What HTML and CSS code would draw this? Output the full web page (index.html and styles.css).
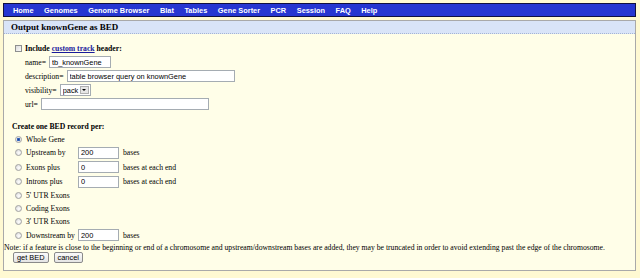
FILE: index.html
```html
<!DOCTYPE html>
<html lang="en">
<head>
    <meta charset="UTF-8">
    <title>Output knownGene as BED</title>
    <link rel="stylesheet" href="styles.css">
</head>
<body>
    <div class="nav">
        <a href="#">Home</a>
        <a href="#">Genomes</a>
        <a href="#">Genome Browser</a>
        <a href="#">Blat</a>
        <a href="#">Tables</a>
        <a href="#">Gene Sorter</a>
        <a href="#">PCR</a>
        <a href="#">Session</a>
        <a href="#">FAQ</a>
        <a href="#">Help</a>
    </div>

    <div class="panel">
        <div class="panel-title">Output knownGene as BED</div>

        <div class="track-header">
            <label class="check-row">
                <input type="checkbox" class="check">
                <span>Include <a href="#">custom track</a> header:</span>
            </label>
            <div class="field"><span>name=</span><input class="text-in w-name" value="tb_knownGene"></div>
            <div class="field"><span>description=</span><input class="text-in w-desc" value="table browser query on knownGene"></div>
            <div class="field">
                <span>visibility=</span>
                <span class="select">
                    <select><option>pack</option></select>
                    <span class="select-btn"></span>
                </span>
            </div>
            <div class="field"><span>url=</span><input class="text-in w-desc" value=""></div>
        </div>

        <div class="records">
            <div class="records-title">Create one BED record per:</div>
            <div class="opt-grid">
                <label class="opt full"><input type="radio" name="rec" class="radio" checked> Whole Gene</label>

                <label class="opt"><input type="radio" name="rec" class="radio"> Upstream by</label>
                <input class="text-in w-num" value="200">
                <span class="unit">bases</span>

                <label class="opt"><input type="radio" name="rec" class="radio"> Exons plus</label>
                <input class="text-in w-num" value="0">
                <span class="unit">bases at each end</span>

                <label class="opt"><input type="radio" name="rec" class="radio"> Introns plus</label>
                <input class="text-in w-num" value="0">
                <span class="unit">bases at each end</span>

                <label class="opt full"><input type="radio" name="rec" class="radio"> 5' UTR Exons</label>
                <label class="opt full"><input type="radio" name="rec" class="radio"> Coding Exons</label>
                <label class="opt full"><input type="radio" name="rec" class="radio"> 3' UTR Exons</label>

                <label class="opt"><input type="radio" name="rec" class="radio"> Downstream by</label>
                <input class="text-in w-num" value="200">
                <span class="unit">bases</span>
            </div>
        </div>

        <p class="note">Note: if a feature is close to the beginning or end of a chromosome and upstream/downstream bases are added, they may be truncated in order to avoid extending past the edge of the chromosome.</p>

        <div class="buttons">
            <button class="btn">get BED</button>
            <button class="btn">cancel</button>
        </div>
    </div>
</body>
</html>
```

FILE: styles.css
```css
body {
    margin: 0;
    padding: 3px 4px 0 3px;
    background: #fff9d2;
    font-family: "Liberation Serif", "Times New Roman", serif;
    font-size: 7.7px;
    color: #000;
}

/* top menu */
.nav {
    display: flex;
    align-items: center;
    gap: 10.5px;
    height: 12px;
    padding-left: 9px;
    background: #2636d1;
    border: 1px solid #101040;
}
.nav a {
    font-family: "Liberation Sans", Arial, sans-serif;
    font-size: 7.4px;
    font-weight: bold;
    color: #fff;
    text-decoration: none;
}

/* main box */
.panel {
    margin-top: 3px;
    background: #fffee8;
    border: 1px solid #a9a9a9;
    padding-bottom: 7px;
}
.panel-title {
    height: 12px;
    line-height: 12px;
    padding-left: 7px;
    font-size: 9px;
    font-weight: bold;
    background: #d9e4f8;
    border-bottom: 1px dotted #a4b4d4;
}

.track-header {
    display: flex;
    flex-direction: column;
    gap: 2px;
    padding: 8px 0 0 11px;
}
.check-row {
    display: flex;
    align-items: center;
    gap: 3px;
    height: 12px;
    font-weight: bold;
}
.check-row a {
    color: #1a1a9c;
}
.check {
    appearance: none;
    margin: 0;
    width: 7px;
    height: 7px;
    border: 1px solid #8e8f8f;
    background: linear-gradient(135deg, #dcdcdc, #fbfbfb);
    box-sizing: border-box;
}
.field {
    display: flex;
    align-items: center;
    gap: 3px;
    height: 12px;
    padding-left: 10px;
}

.text-in {
    box-sizing: border-box;
    height: 12px;
    margin: 0;
    padding: 0 2px;
    border: 1px solid #a5acb2;
    background: #fff;
    font-family: "Liberation Sans", Arial, sans-serif;
    font-size: 7.4px;
    color: #000;
}
.w-name { width: 62px; }
.w-desc { width: 168px; }
.w-num { width: 41px; }

.select {
    display: inline-flex;
    align-items: center;
    box-sizing: border-box;
    width: 31px;
    height: 12px;
    border: 1px solid #a5acb2;
    background: #fff;
}
.select select {
    appearance: none;
    width: 19px;
    margin: 0;
    padding: 0 0 0 2px;
    border: none;
    background: transparent;
    font-family: "Liberation Sans", Arial, sans-serif;
    font-size: 7.4px;
}
.select-btn {
    position: relative;
    box-sizing: border-box;
    width: 9px;
    height: 8px;
    margin-left: auto;
    margin-right: 1px;
    border: 1px solid #b0b0b0;
    background: #e6e6e6;
}
.select-btn::after {
    content: "";
    position: absolute;
    left: 1.5px;
    top: 2px;
    border-left: 2.5px solid transparent;
    border-right: 2.5px solid transparent;
    border-top: 2.5px solid #000;
}

/* record options */
.records {
    padding: 12px 0 0 8px;
}
.records-title {
    height: 10.5px;
    line-height: 10.5px;
    font-weight: bold;
}
.opt-grid {
    display: grid;
    grid-template-columns: auto auto 1fr;
    align-items: center;
    column-gap: 3px;
    padding-left: 3px;
}
.opt {
    display: flex;
    align-items: center;
    gap: 4px;
    height: 14.5px;
}
.opt.full {
    grid-column: 1 / -1;
    height: 13px;
}
.unit {
    padding-left: 1px;
}
.radio {
    appearance: none;
    margin: 0;
    width: 7px;
    height: 7px;
    border-radius: 50%;
    border: 1px solid #a2a2a2;
    background: radial-gradient(circle at 60% 60%, #fff, #d6d6d6);
    box-sizing: border-box;
}
.radio:checked {
    background: radial-gradient(circle, #1f3f8a 0, #3a6cc6 1.4px, #e6e6e6 2px, #fff 3px);
}

.note {
    margin: 0;
    height: 9.5px;
    line-height: 9.5px;
}

.buttons {
    display: flex;
    gap: 5px;
    padding: 0 0 0 9px;
}
.btn {
    height: 11px;
    margin: 0;
    padding: 0 3px;
    border: 1px solid #8a8a8a;
    border-radius: 2px;
    background: linear-gradient(#fafafa, #e4e4e4);
    font-family: "Liberation Sans", Arial, sans-serif;
    font-size: 7.4px;
    line-height: 9px;
    color: #000;
}
```
